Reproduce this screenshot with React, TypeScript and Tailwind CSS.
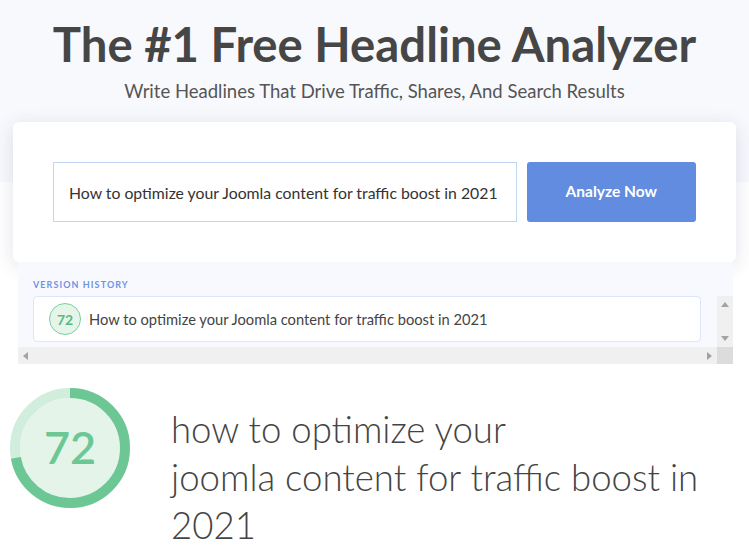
import { useState } from "react";

const FONT = { fontFamily: "Lato, 'Open Sans', sans-serif" };

function ScoreRing({ score }: { score: number }) {
  const r = 55;
  const c = 2 * Math.PI * r;
  return (
    <div className="relative h-[120px] w-[120px] shrink-0">
      <svg viewBox="0 0 120 120" className="h-full w-full">
        <circle cx="60" cy="60" r="50" fill="#e4f4e9" />
        <circle cx="60" cy="60" r={r} fill="none" stroke="#d1eedc" strokeWidth="10" />
        <circle
          cx="60"
          cy="60"
          r={r}
          fill="none"
          stroke="#6cc794"
          strokeWidth="10"
          strokeDasharray={`${(c * score) / 100} ${c}`}
          transform="rotate(-90 60 60)"
        />
      </svg>
      <span className="absolute inset-0 flex items-center justify-center text-[45px] font-semibold text-[#6cc794]">
        {score}
      </span>
    </div>
  );
}

/* fake classic scrollbars, so the picture doesn't depend on the browser's own */
function Arrow({ dir }: { dir: "up" | "down" | "left" | "right" }) {
  const pts = {
    up: "0,5 4,0 8,5",
    down: "0,0 8,0 4,5",
    left: "5,0 5,8 0,4",
    right: "0,0 5,4 0,8",
  }[dir];
  const vertical = dir === "up" || dir === "down";
  return (
    <svg width={vertical ? 8 : 5} height={vertical ? 5 : 8} viewBox={vertical ? "0 0 8 5" : "0 0 5 8"}>
      <polygon points={pts} fill="#a3a3a3" />
    </svg>
  );
}

export default function App() {
  const [headline, setHeadline] = useState("How to optimize your Joomla content for traffic boost in 2021");
  const lower = headline.toLowerCase();
  const firstBreak = lower.indexOf(" joomla");

  return (
    <div className="min-h-screen bg-white text-[#444]" style={FONT}>
      {/* Hero */}
      <div className="h-[182px] bg-[#f8f9fd] pt-[16px] text-center">
        <h1 className="text-[47.3px] font-bold leading-[56px] text-[#464646]">The #1 Free Headline Analyzer</h1>
        <p className="mt-[8px] text-[18.5px] leading-[22px] text-[#555]">
          Write Headlines That Drive Traffic, Shares, And Search Results
        </p>
      </div>

      {/* Analyzer card */}
      <div className="mx-[13px] -mt-[60px] flex h-[140px] items-center gap-[10px] rounded-[6px] bg-white px-[40px] shadow-[0_4px_20px_rgba(40,50,90,0.14)]">
        <input
          type="text"
          value={headline}
          onChange={(e) => setHeadline(e.target.value)}
          className="h-[60px] w-[465px] border border-[#c3d6f1] px-[15px] text-[15.8px] text-[#333] outline-none"
        />
        <button
          type="button"
          className="h-[60px] w-[170px] rounded-[3px] bg-[#628ce0] text-[15.5px] font-bold text-white"
        >
          Analyze Now
        </button>
      </div>

      {/* Version history */}
      <div className="mx-[18px] w-[715px] bg-[#f8f9fe]">
        <div className="px-[15px] pt-[17px] pb-[5px] text-[9px] font-bold uppercase leading-[12px] tracking-[0.12em] text-[#6f93e2]">
          Version History
        </div>
        <div className="flex">
          <div className="flex-1 pl-[15px] pr-[16px]">
            <div className="flex h-[46px] items-center gap-[8px] rounded-[4px] border border-[#dde5fb] bg-white px-[15px]">
              <span className="flex h-[32px] w-[32px] items-center justify-center rounded-full border border-[#7ccf9f] bg-[#e6f5ea] text-[14px] font-bold text-[#5cb883]">
                72
              </span>
              <span className="text-[14.7px] text-[#444]">{headline}</span>
            </div>
            <div className="h-[5px]" />
          </div>
          <div className="flex w-[16px] flex-col items-center justify-between bg-[#f0f0f0] py-[6px]">
            <Arrow dir="up" />
            <Arrow dir="down" />
          </div>
        </div>
        <div className="flex h-[17px]">
          <div className="flex flex-1 items-center justify-between bg-[#f0f0f0] px-[5px]">
            <Arrow dir="left" />
            <Arrow dir="right" />
          </div>
          <div className="w-[16px] bg-[#dcdcdc]" />
        </div>
      </div>

      {/* Result */}
      <div className="flex gap-[41px] pl-[10px] pt-[24px]">
        <ScoreRing score={72} />
        <h2 className="w-[550px] pt-[17px] text-[36.6px] font-light leading-[48px] text-[#444]">
          {firstBreak > 0 ? (
            <>
              <span className="block">{lower.slice(0, firstBreak)}</span>
              {lower.slice(firstBreak + 1)}
            </>
          ) : (
            lower
          )}
        </h2>
      </div>
    </div>
  );
}
